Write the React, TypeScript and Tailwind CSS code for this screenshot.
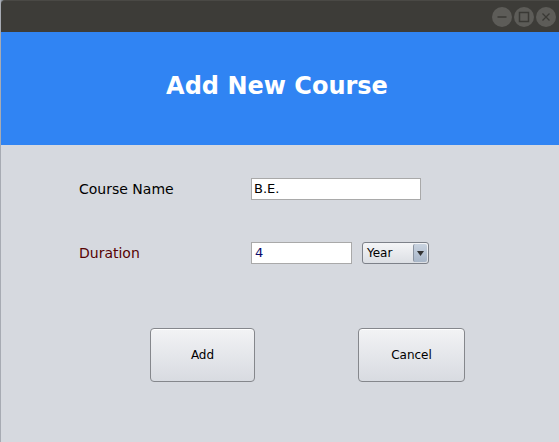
export default function App() {
  return (
    <div className="flex w-[559px] h-[442px] overflow-hidden bg-[#8f969f]" style={{ fontFamily: '"DejaVu Sans", Verdana, sans-serif' }}>
      <div className="w-[1px] bg-[#a7abb3]" />
      <div className="flex flex-col flex-1">
        <TitleBar />
        <div className="h-[113px] bg-[#3084f3] flex items-center justify-center pb-[6px] pr-[6px]">
          <h1 className="text-[24px] font-bold text-white">Add New Course</h1>
        </div>
        <div className="flex-1 bg-[#d6d9df] pt-[33px] pl-[78px]">
          <div className="flex items-center h-[22px]">
            <span className="w-[172px] text-[14px] text-black">Course Name</span>
            <div className="w-[170px] h-[22px] bg-white border border-[#a9a9a9] flex items-center px-[2px] text-[13px] text-black">
              B.E.
            </div>
          </div>
          <div className="flex items-center h-[22px] mt-[42px]">
            <span className="w-[172px] text-[14px] text-[#560303]">Duration</span>
            <div className="w-[101px] h-[22px] bg-white border border-[#a9a9a9] flex items-center px-[3px] text-[13px] text-[#0a0a6a]">
              4
            </div>
            <div className="ml-[10px] w-[67px] h-[22px] rounded-[3px] border border-[#7d8189] bg-gradient-to-b from-[#f4f5f7] to-[#dcdfe4] flex items-center text-[12px] text-black">
              <span className="flex-1 pl-[4px]">Year</span>
              <div className="w-[14px] h-[18px] mr-[1px] rounded-[2px] bg-gradient-to-b from-[#c9d3e0] to-[#a8b6c8] border-l border-[#8a93a0] flex items-center justify-center">
                <svg width="7" height="5" viewBox="0 0 7 5"><path d="M0 0H7L3.5 5Z" fill="#333" /></svg>
              </div>
            </div>
          </div>
          <div className="flex mt-[64px] pl-[71px]">
            <Btn w="w-[105px]">Add</Btn>
            <div className="w-[103px]" />
            <Btn w="w-[107px]">Cancel</Btn>
          </div>
        </div>
      </div>
    </div>
  );
}

function Btn({ w, children }: { w: string; children: string }) {
  return (
    <button className={`${w} h-[54px] rounded-[4px] border border-[#85878c] bg-gradient-to-b from-[#f2f3f5] to-[#d8dbe1] text-[12px] text-black shadow-[inset_0_1px_0_#ffffff]`}>
      {children}
    </button>
  );
}

function TitleBar() {
  return (
    <div className="h-[32px] bg-[#3d3c38] rounded-tl-[4px] border-t border-[#4a4945] flex items-center justify-end pr-[3px] gap-[2px]">
      <Circle>
        <path d="M5.5 10H14.5" stroke="#3a3935" strokeWidth="1.5" />
      </Circle>
      <Circle>
        <rect x="5.5" y="5.5" width="9" height="9" fill="none" stroke="#3a3935" strokeWidth="1.5" />
      </Circle>
      <Circle>
        <path d="M6.5 6.5L13.5 13.5M13.5 6.5L6.5 13.5" stroke="#3a3935" strokeWidth="1.3" />
      </Circle>
    </div>
  );
}

function Circle({ children }: { children: React.ReactNode }) {
  return (
    <svg width="20" height="20" viewBox="0 0 20 20">
      <circle cx="10" cy="10" r="10" fill="#5d5c58" />
      {children}
    </svg>
  );
}
